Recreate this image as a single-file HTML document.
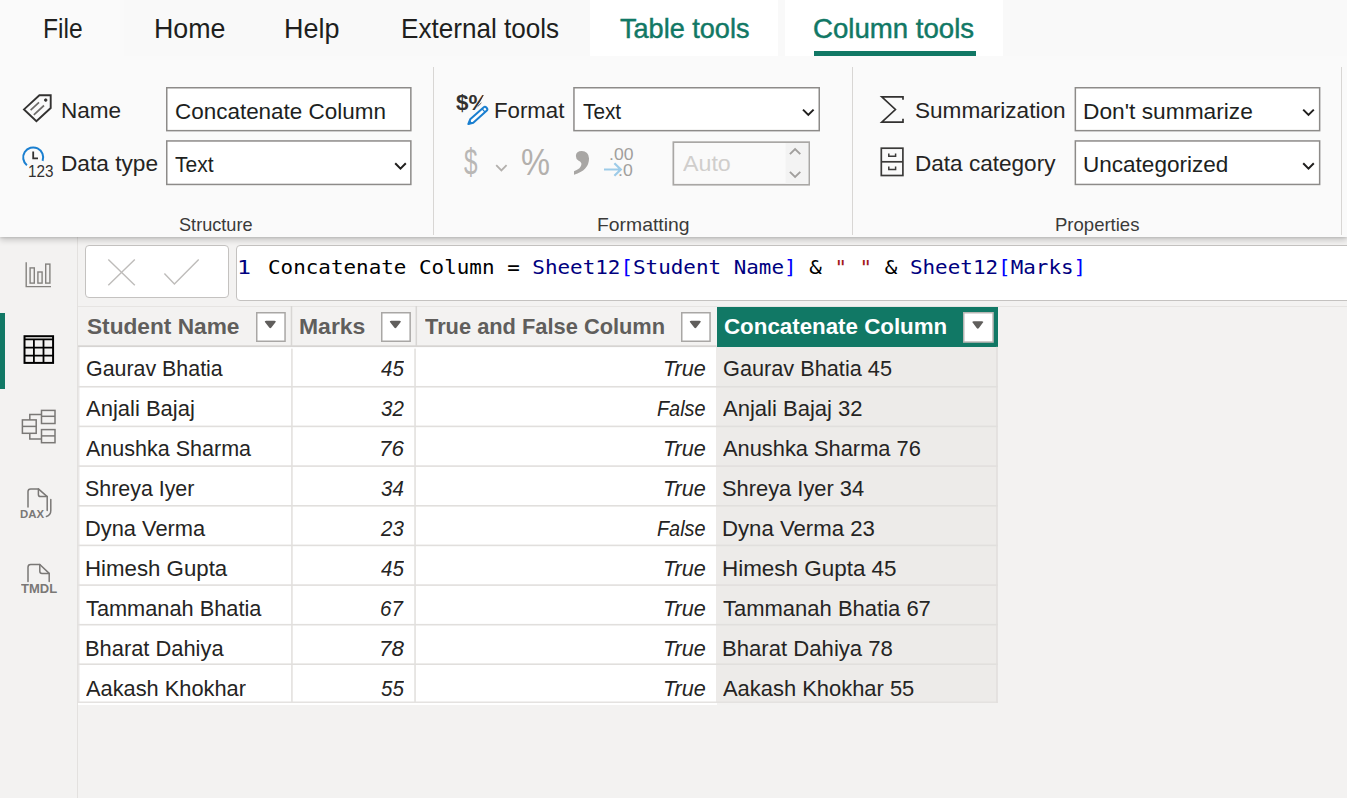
<!doctype html>
<html lang="en"><head><meta charset="utf-8"><title>Power BI - Column tools</title>
<style>
*{box-sizing:border-box;margin:0;padding:0}
html,body{width:1347px;height:798px;overflow:hidden}
body{position:relative;background:#f3f2f1;font-family:"Liberation Sans",sans-serif;color:#252423}
.m{font-family:"Liberation Mono",monospace}
.sf{font-family:"Liberation Serif",serif}
.dm{font-family:"DejaVu Sans Mono","Liberation Mono",monospace}
.t{position:absolute;z-index:3;white-space:pre;line-height:0;transform-origin:0 0;display:block}
.abs{position:absolute}
#ribbon{position:absolute;left:0;top:0;width:1347px;height:237px;background:#fafafa;box-shadow:0 1px 2px rgba(0,0,0,.09),0 3px 6px rgba(0,0,0,.19);z-index:2}
.tab{position:absolute;top:0;height:56px;background:#fff}
#tabline{position:absolute;left:814px;top:51px;width:161.5px;height:5px;background:#117865}
.vsep{position:absolute;top:67px;width:1.5px;height:168px;background:#d8d6d4}
#side{position:absolute;left:0;top:237px;width:78px;height:561px;background:#f3f2f1;border-right:1.5px solid #e3e1df}
#sel{position:absolute;left:0;top:313px;width:4.5px;height:76px;background:#117865}
.fbox{position:absolute;background:#fff;border:1px solid #c4c2c0}
</style></head>
<body>
<div id="ribbon">
  <div id="tabstrip" class="abs" style="left:124px;top:0;width:1223px;height:56px;background:#f9f9f9"></div>
  <div class="tab" style="left:590px;width:187.5px"></div>
  <div class="tab" style="left:785px;width:218px"></div>
  <div id="tabline"></div>
  <div class="vsep" style="left:432.5px"></div>
  <div class="vsep" style="left:851.5px"></div>
  <div class="vsep" style="left:1340.5px"></div>
  <!-- inputs -->
  <svg class="abs" style="left:0;top:0" width="1347" height="237" viewBox="0 0 1347 237">
  <rect x="166.75" y="87.75" width="244.1" height="42.9" fill="#fff" stroke="#8d8b89" stroke-width="1.5"/>
  <rect x="166.75" y="140.95" width="244.1" height="43.5" fill="#fff" stroke="#8d8b89" stroke-width="1.5"/>
  <rect x="573.95" y="87.75" width="245.3" height="42.9" fill="#fff" stroke="#8d8b89" stroke-width="1.5"/>
  <rect x="673.35" y="142.15" width="135.8" height="42.6" fill="#fafafa" stroke="#a9a7a5" stroke-width="1.7"/>
  <rect x="785.6" y="143" width="22.7" height="40.9" fill="#f3f3f3"/>
  <rect x="1075.35" y="87.75" width="244.3" height="42.9" fill="#fff" stroke="#8d8b89" stroke-width="1.5"/>
  <rect x="1075.35" y="140.95" width="244.3" height="43.5" fill="#fff" stroke="#8d8b89" stroke-width="1.5"/>
  </svg>
</div>
<div id="side"></div>
<div id="sel"></div>
<!-- formula bar -->
<div class="fbox" style="left:85px;top:245px;width:144px;height:53px;border-radius:4px"></div>
<div class="fbox" style="left:236px;top:245px;width:1120px;height:56px;border-radius:4px 0 0 4px"></div>
<!-- table -->
<div id="grid">
<div class="abs" style="left:78px;top:305.5px;width:1269px;height:1px;background:#e6e4e2"></div>
<div class="abs" style="left:77.5px;top:346px;width:639px;height:359px;background:#fff"></div>
<div class="abs" style="left:715.8px;top:346px;width:281.9px;height:357px;background:#edebe9"></div>
<div class="abs" style="left:716.8px;top:307.2px;width:281.4px;height:39.5px;background:#117865"></div>
<svg class="abs" style="left:0;top:0" width="1347" height="798" viewBox="0 0 1347 798" shape-rendering="geometricPrecision">
<rect x="78" y="345.3" width="638.5" height="1.8" fill="#d6d4d2"/>
<rect x="290.75" y="306" width="1.5" height="40" fill="#d8d6d4"/>
<rect x="415.55" y="306" width="1.5" height="40" fill="#d8d6d4"/>
<rect x="291.0" y="348.6" width="1.8" height="354" fill="#e6e4e2"/>
<rect x="414.15" y="348.6" width="1.8" height="354" fill="#e6e4e2"/>
<rect x="78" y="385.95" width="919.7" height="1.6" fill="#e1dfdd"/>
<rect x="78" y="425.60" width="919.7" height="1.6" fill="#e1dfdd"/>
<rect x="78" y="465.30" width="919.7" height="1.6" fill="#e1dfdd"/>
<rect x="78" y="505.00" width="919.7" height="1.6" fill="#e1dfdd"/>
<rect x="78" y="544.60" width="919.7" height="1.6" fill="#e1dfdd"/>
<rect x="78" y="584.30" width="919.7" height="1.6" fill="#e1dfdd"/>
<rect x="78" y="623.90" width="919.7" height="1.6" fill="#e1dfdd"/>
<rect x="78" y="663.40" width="919.7" height="1.6" fill="#e1dfdd"/>
<rect x="78" y="701.5" width="919.7" height="1.5" fill="#e4e2e0"/>
<rect x="996.2" y="346.8" width="1.5" height="356.2" fill="#e1dfdd"/>
<rect x="78.2" y="347" width="1.2" height="356" fill="#e4e2e0"/>
</svg>
<svg class="abs" style="left:256px;top:312px" width="29.8" height="30.0"><rect x="0.75" y="0.75" width="28.3" height="28.5" fill="#fff" stroke="#a9a7a5" stroke-width="1.5"/><path transform="translate(7.80 8.05)" d="M2.3 0.7 H10.7 Q12.8 0.7 11.5 2.4 L7.6 7.5 Q6.5 8.9 5.4 7.5 L1.5 2.4 Q0.2 0.7 2.3 0.7Z" fill="#605e5c"/></svg>
<svg class="abs" style="left:380.9px;top:312px" width="29.9" height="30.0"><rect x="0.75" y="0.75" width="28.4" height="28.5" fill="#fff" stroke="#a9a7a5" stroke-width="1.5"/><path transform="translate(7.85 8.05)" d="M2.3 0.7 H10.7 Q12.8 0.7 11.5 2.4 L7.6 7.5 Q6.5 8.9 5.4 7.5 L1.5 2.4 Q0.2 0.7 2.3 0.7Z" fill="#605e5c"/></svg>
<svg class="abs" style="left:681.2px;top:312px" width="29.8" height="30.0"><rect x="0.75" y="0.75" width="28.3" height="28.5" fill="#fff" stroke="#a9a7a5" stroke-width="1.5"/><path transform="translate(7.80 8.05)" d="M2.3 0.7 H10.7 Q12.8 0.7 11.5 2.4 L7.6 7.5 Q6.5 8.9 5.4 7.5 L1.5 2.4 Q0.2 0.7 2.3 0.7Z" fill="#605e5c"/></svg>
<svg class="abs" style="left:963.2px;top:312px" width="30.8" height="30.8"><rect x="0.75" y="0.75" width="29.3" height="29.3" fill="#fff" stroke="#b8b6b4" stroke-width="1.5"/><path transform="translate(8.30 8.45)" d="M2.3 0.7 H10.7 Q12.8 0.7 11.5 2.4 L7.6 7.5 Q6.5 8.9 5.4 7.5 L1.5 2.4 Q0.2 0.7 2.3 0.7Z" fill="#605e5c"/></svg>
</div>
<svg class="abs" style="left:0;top:0;z-index:3" width="1347" height="798" viewBox="0 0 1347 798" fill="none" stroke-linecap="butt" stroke-linejoin="miter">
<!-- name tag -->
<g stroke="#323130" stroke-width="1.9">
<path d="M39.4 95.3 H50.7 V108 L36.4 121.3 L24 109.4 Z" stroke-linejoin="miter"/>
<circle cx="45.7" cy="100.1" r="1.3" fill="#323130" stroke-width="0.8"/>
</g>
<g stroke="#6e6c6a" stroke-width="1.7">
<path d="M30.6 110.2 L39 102.4 M33.8 114.8 L44 105.5"/>
</g>
<!-- data type clock -->
<path d="M26.9 165.2 A10 10 0 1 1 42.6 160.8" stroke="#1a7fd0" stroke-width="2"/>
<path d="M33.2 151.6 V158.4 H38" stroke="#323130" stroke-width="1.8"/>
<!-- format pencil moved -->
<!-- disabled currency chevron -->
<path d="M496.2 165.2 L501.4 170.4 L506.6 165.2" stroke="#b3b0ad" stroke-width="1.8"/>
<!-- decimal arrow -->
<path d="M604 169.5 H620.6 M614.4 163.2 L620.8 169.5 L614.4 175.8" stroke="#9dcbe8" stroke-width="2.2"/>
<!-- spinner -->
<path d="M789.9 154.2 L795.1 149 L800.3 154.2 M789.9 171.8 L795.1 177 L800.3 171.8" stroke="#a19f9d" stroke-width="1.9"/>
<!-- select chevrons -->
<g stroke="#201f1e" stroke-width="2">
<path d="M395.2 163.3 L400.5 168.6 L405.8 163.3"/>
<path d="M803 109.6 L808.3 114.9 L813.6 109.6"/>
<path d="M1303.2 109.6 L1308.5 114.9 L1313.8 109.6"/>
<path d="M1303.2 163.3 L1308.5 168.6 L1313.8 163.3"/>
</g>
<!-- sigma -->
<path d="M903 99.8 V96.9 H881.8 L895.4 109.5 L881.8 122.1 H903 V118.8" stroke="#323130" stroke-width="1.7"/>
<!-- data category cabinet -->
<g stroke="#3b3a39" stroke-width="1.7">
<rect x="881.3" y="148.2" width="21.6" height="27.3"/>
<path d="M881.3 161.8 H902.9"/>
<path d="M888.8 153.4 V156.2 H895.6 V153.4 M888.8 166.6 V169.4 H895.6 V166.6" stroke-width="1.5"/>
</g>
<!-- formula X / check -->
<path d="M108.3 259.4 L134.8 285.2 M134.8 259.4 L108.3 285.2 M164.4 273.5 L174.4 284 L198.7 259.4" stroke="#bebcba" stroke-width="1.4"/>
<!-- sidebar: report -->
<g stroke="#84827f" stroke-width="1.4">
<path d="M26.2 262.3 V286.6 H51"/>
<rect x="30.1" y="267.9" width="4.2" height="15.2"/>
<rect x="37.9" y="272" width="4.2" height="11.1"/>
<rect x="45.7" y="264.1" width="4.2" height="19"/>
</g>
<!-- sidebar: table (active) -->
<rect x="23" y="334.6" width="31.6" height="29.8" fill="#fff" stroke="none"/>
<rect x="24.5" y="336.2" width="28.6" height="26.7" fill="#f3f2f1" stroke="#000" stroke-width="2"/>
<path d="M24.5 339.4 H53 M24.5 347.7 H53 M24.5 355.7 H53 M33.9 340 V363 M43.5 340 V363" stroke="#000" stroke-width="1.8"/>
<!-- sidebar: model -->
<g stroke="#7a7876" stroke-width="1.5">
<rect x="22.4" y="419.9" width="13.8" height="13.4"/>
<path d="M22.4 426.4 H36.2"/>
<rect x="41.5" y="410.4" width="13.5" height="13.1"/>
<path d="M41.5 416.3 H55"/>
<rect x="41.5" y="429.6" width="13.5" height="13.1"/>
<path d="M41.5 435.9 H55"/>
<path d="M29.8 419.9 V414.4 H41.5 M29.8 433.3 V439 H41.5"/>
</g>
<!-- sidebar: DAX -->
<g stroke="#7a7876" stroke-width="1.5" stroke-linecap="round" stroke-linejoin="round">
<path d="M28 507 V491.6 Q28 488.9 30.7 488.9 H38.4 L47.2 496.6 V510.4"/>
<path d="M38.4 488.9 V494.4 Q38.4 496.6 40.6 496.6 H47.2"/>
<path d="M50.8 499.4 V510.6 Q50.8 515.4 46.4 516.4"/>
</g>
<!-- sidebar: TMDL -->
<g stroke="#7a7876" stroke-width="1.5" stroke-linecap="round" stroke-linejoin="round">
<path d="M28 581.4 V567.2 Q28 564.5 30.7 564.5 H39.8 L49.2 573.4 V581.4"/>
<path d="M39.8 564.5 V571.2 Q39.8 573.4 42 573.4 H49.2"/>
</g>
</svg>


<!-- text -->
<div class="t" style="font-size:27.2px;color:#201f1e;left:43.10px;top:28.57px;transform:scaleX(0.9048);">File</div>
<div class="t" style="font-size:27.2px;color:#201f1e;left:154.01px;top:28.57px;transform:scaleX(0.9859);">Home</div>
<div class="t" style="font-size:27.2px;color:#201f1e;left:284.01px;top:28.57px;transform:scaleX(0.9909);">Help</div>
<div class="t" style="font-size:27.2px;color:#201f1e;left:400.54px;top:28.57px;transform:scaleX(0.9601);">External tools</div>
<div class="t" style="font-size:27.2px;color:#117865;-webkit-text-stroke:0.45px #117865;left:619.50px;top:28.57px;transform:scaleX(0.9962);">Table tools</div>
<div class="t" style="font-size:27.2px;color:#117865;-webkit-text-stroke:0.45px #117865;left:812.98px;top:28.57px;transform:scaleX(1.0158);">Column tools</div>
<div class="t" style="font-size:21.6px;color:#252423;left:60.96px;top:110.51px;transform:scaleX(1.0446);">Name</div>
<div class="t" style="font-size:21.6px;color:#252423;left:60.95px;top:163.51px;transform:scaleX(1.0495);">Data type</div>
<div class="t" style="font-size:21.6px;color:#252423;left:493.97px;top:110.51px;transform:scaleX(1.0294);">Format</div>
<div class="t" style="font-size:21.6px;color:#252423;left:914.95px;top:110.51px;transform:scaleX(1.0455);">Summarization</div>
<div class="t" style="font-size:21.6px;color:#252423;left:914.96px;top:163.51px;transform:scaleX(1.0448);">Data category</div>
<div class="t" style="font-size:21.6px;color:#201f1e;left:175.00px;top:112.01px;transform:scaleX(1.0396);">Concatenate Column</div>
<div class="t" style="font-size:21.6px;color:#201f1e;left:175.00px;top:165.01px;transform:scaleX(0.9750);">Text</div>
<div class="t" style="font-size:21.6px;color:#201f1e;left:583.00px;top:112.01px;transform:scaleX(0.9625);">Text</div>
<div class="t" style="font-size:21.6px;color:#d0cecc;left:682.70px;top:164.11px;transform:scaleX(1.0750);">Auto</div>
<div class="t" style="font-size:21.6px;color:#201f1e;left:1082.95px;top:112.01px;transform:scaleX(1.0531);">Don&#x27;t summarize</div>
<div class="t" style="font-size:21.6px;color:#201f1e;left:1082.96px;top:165.01px;transform:scaleX(1.0435);">Uncategorized</div>
<div class="t" style="font-size:17.7px;color:#3b3a39;left:179.00px;top:224.56px;transform:scaleX(1.0250);">Structure</div>
<div class="t" style="font-size:17.7px;color:#3b3a39;left:596.91px;top:224.56px;transform:scaleX(1.0940);">Formatting</div>
<div class="t" style="font-size:17.7px;color:#3b3a39;left:1054.95px;top:224.56px;transform:scaleX(1.0475);">Properties</div>
<div class="t" style="font-size:21.2px;color:#605e5c;font-weight:bold;left:87.00px;top:326.65px;transform:scaleX(1.0699);">Student Name</div>
<div class="t" style="font-size:21.2px;color:#605e5c;font-weight:bold;left:298.92px;top:326.65px;transform:scaleX(1.0833);">Marks</div>
<div class="t" style="font-size:21.2px;color:#605e5c;font-weight:bold;left:424.50px;top:326.65px;transform:scaleX(1.0300);">True and False Column</div>
<div class="t" style="font-size:21.2px;color:#ffffff;font-weight:bold;left:724.00px;top:326.85px;transform:scaleX(1.0533);">Concatenate Column</div>
<div class="t" style="font-size:21.4px;color:#252423;left:86.00px;top:368.98px;">Gaurav Bhatia</div>
<div class="t" style="font-size:21.4px;color:#252423;font-style:italic;left:381.00px;top:368.98px;transform:scaleX(0.9583);">45</div>
<div class="t" style="font-size:21.4px;color:#252423;font-style:italic;left:662.58px;top:368.98px;transform:scaleX(1.0100);">True</div>
<div class="t" style="font-size:21.4px;color:#252423;left:723.00px;top:368.98px;transform:scaleX(1.0151);">Gaurav Bhatia 45</div>
<div class="t" style="font-size:21.4px;color:#252423;left:86.00px;top:408.98px;transform:scaleX(1.0286);">Anjali Bajaj</div>
<div class="t" style="font-size:21.4px;color:#252423;font-style:italic;left:381.00px;top:408.98px;transform:scaleX(0.9583);">32</div>
<div class="t" style="font-size:21.4px;color:#252423;font-style:italic;left:656.80px;top:408.98px;transform:scaleX(0.9269);">False</div>
<div class="t" style="font-size:21.4px;color:#252423;left:723.00px;top:408.98px;transform:scaleX(1.0296);">Anjali Bajaj 32</div>
<div class="t" style="font-size:21.4px;color:#252423;left:86.00px;top:448.98px;transform:scaleX(1.0061);">Anushka Sharma</div>
<div class="t" style="font-size:21.4px;color:#252423;font-style:italic;left:378.91px;top:448.98px;transform:scaleX(1.0455);">76</div>
<div class="t" style="font-size:21.4px;color:#252423;font-style:italic;left:662.58px;top:448.98px;transform:scaleX(1.0100);">True</div>
<div class="t" style="font-size:21.4px;color:#252423;left:723.00px;top:448.98px;transform:scaleX(1.0206);">Anushka Sharma 76</div>
<div class="t" style="font-size:21.4px;color:#252423;left:85.00px;top:488.58px;">Shreya Iyer</div>
<div class="t" style="font-size:21.4px;color:#252423;font-style:italic;left:381.00px;top:488.58px;transform:scaleX(0.9583);">34</div>
<div class="t" style="font-size:21.4px;color:#252423;font-style:italic;left:662.58px;top:488.58px;transform:scaleX(1.0100);">True</div>
<div class="t" style="font-size:21.4px;color:#252423;left:721.98px;top:488.58px;transform:scaleX(1.0217);">Shreya Iyer 34</div>
<div class="t" style="font-size:21.4px;color:#252423;left:84.98px;top:529.18px;transform:scaleX(1.0214);">Dyna Verma</div>
<div class="t" style="font-size:21.4px;color:#252423;font-style:italic;left:381.00px;top:529.18px;transform:scaleX(0.9583);">23</div>
<div class="t" style="font-size:21.4px;color:#252423;font-style:italic;left:656.80px;top:529.18px;transform:scaleX(0.9269);">False</div>
<div class="t" style="font-size:21.4px;color:#252423;left:721.96px;top:529.18px;transform:scaleX(1.0370);">Dyna Verma 23</div>
<div class="t" style="font-size:21.4px;color:#252423;left:84.96px;top:569.08px;transform:scaleX(1.0404);">Himesh Gupta</div>
<div class="t" style="font-size:21.4px;color:#252423;font-style:italic;left:381.00px;top:569.08px;transform:scaleX(0.9583);">45</div>
<div class="t" style="font-size:21.4px;color:#252423;font-style:italic;left:662.58px;top:569.08px;transform:scaleX(1.0100);">True</div>
<div class="t" style="font-size:21.4px;color:#252423;left:721.95px;top:569.08px;transform:scaleX(1.0485);">Himesh Gupta 45</div>
<div class="t" style="font-size:21.4px;color:#252423;left:86.00px;top:608.78px;transform:scaleX(1.0173);">Tammanah Bhatia</div>
<div class="t" style="font-size:21.4px;color:#252423;font-style:italic;left:380.04px;top:608.78px;transform:scaleX(0.9583);">67</div>
<div class="t" style="font-size:21.4px;color:#252423;font-style:italic;left:662.58px;top:608.78px;transform:scaleX(1.0100);">True</div>
<div class="t" style="font-size:21.4px;color:#252423;left:723.00px;top:608.78px;transform:scaleX(1.0282);">Tammanah Bhatia 67</div>
<div class="t" style="font-size:21.4px;color:#252423;left:84.98px;top:648.58px;transform:scaleX(1.0222);">Bharat Dahiya</div>
<div class="t" style="font-size:21.4px;color:#252423;font-style:italic;left:378.91px;top:648.58px;transform:scaleX(1.0455);">78</div>
<div class="t" style="font-size:21.4px;color:#252423;font-style:italic;left:662.58px;top:648.58px;transform:scaleX(1.0100);">True</div>
<div class="t" style="font-size:21.4px;color:#252423;left:721.97px;top:648.58px;transform:scaleX(1.0341);">Bharat Dahiya 78</div>
<div class="t" style="font-size:21.4px;color:#252423;left:86.00px;top:689.18px;transform:scaleX(1.0191);">Aakash Khokhar</div>
<div class="t" style="font-size:21.4px;color:#252423;font-style:italic;left:381.00px;top:689.18px;transform:scaleX(0.9583);">55</div>
<div class="t" style="font-size:21.4px;color:#252423;font-style:italic;left:662.58px;top:689.18px;transform:scaleX(1.0100);">True</div>
<div class="t" style="font-size:21.4px;color:#252423;left:723.00px;top:689.18px;transform:scaleX(1.0247);">Aakash Khokhar 55</div>
<div class="t" style="font-size:16.9px;color:#323130;left:27.90px;top:172.14px;transform:scaleX(0.9037);">123</div>
<div class="t" style="font-size:21.5px;color:#323130;font-weight:bold;left:456.00px;top:103.05px;transform:scaleX(1.0419);">$%</div>
<div class="t" style="font-size:37px;color:#b9b7b5;left:463.70px;top:163.37px;transform:scaleX(0.6571);">$</div>
<div class="t" style="font-size:36px;color:#b3b0ad;left:520.79px;top:163.32px;transform:scaleX(0.9065);">%</div>
<div class="t sf" style="font-size:79px;color:#a8a6a4;font-weight:bold;left:573.33px;top:136.75px;transform:scaleX(0.9571);">,</div>
<div class="t" style="font-size:16.5px;color:#a19f9d;left:608.54px;top:153.78px;transform:scaleX(1.0636);">.00</div>
<div class="t" style="font-size:16.5px;color:#a19f9d;left:617.93px;top:170.08px;transform:scaleX(1.0692);">.0</div>
<div class="t" style="font-size:11.8px;color:#7a7876;font-weight:bold;left:20.20px;top:513.51px;transform:scaleX(0.9640);">DAX</div>
<div class="t" style="font-size:13.4px;color:#7a7876;font-weight:bold;left:21.10px;top:588.95px;transform:scaleX(0.9703);">TMDL</div>
<div class="t dm" style="font-size:19.9px;color:#00007f;left:236.67px;top:267.61px;transform:scaleX(1.1667);">1</div>
<div class="t dm" style="font-size:19.9px;color:#000000;left:268.45px;top:267.61px;transform:scaleX(1.0510);">Concatenate Column = <span style="color:#00007f">Sheet12</span><span style="color:#0000ff">[</span><span style="color:#00007f">Student Name</span><span style="color:#0000ff">]</span> &amp; <span style="color:#a31515">" "</span> &amp; <span style="color:#00007f">Sheet12</span><span style="color:#0000ff">[</span><span style="color:#00007f">Marks</span><span style="color:#0000ff">]</span></div>
<svg class="abs" style="left:0;top:0;z-index:4" width="1347" height="237" viewBox="0 0 1347 237" fill="none">
<path d="M484.3 94 H493 V113 H477.6 V107.2 Z" fill="#fafafa"/>
<path d="M477.6 106.6 L481.4 102.9" stroke="#605e5c" stroke-width="1"/>
<path d="M468.30 124.10 L470.20 119.32 L483.80 107.15 C485.44 105.69 488.50 109.11 486.86 110.58 L473.26 122.75 Z" stroke="#fafafa" stroke-width="4.6" stroke-linejoin="round"/>
<path d="M468.30 124.10 L470.20 119.32 L483.80 107.15 C485.44 105.69 488.50 109.11 486.86 110.58 L473.26 122.75 Z" fill="#fff" stroke="#1a7fd0" stroke-width="2" stroke-linejoin="round"/>
<path d="M468.30 124.10 L471.97 123.10 L469.70 120.57 Z" fill="#1a7fd0" stroke="#1a7fd0" stroke-width="0.8" stroke-linejoin="round"/>
<path d="M485.08 112.18 L482.01 108.75" stroke="#1a7fd0" stroke-width="1.3"/>
</svg>
</body></html>
